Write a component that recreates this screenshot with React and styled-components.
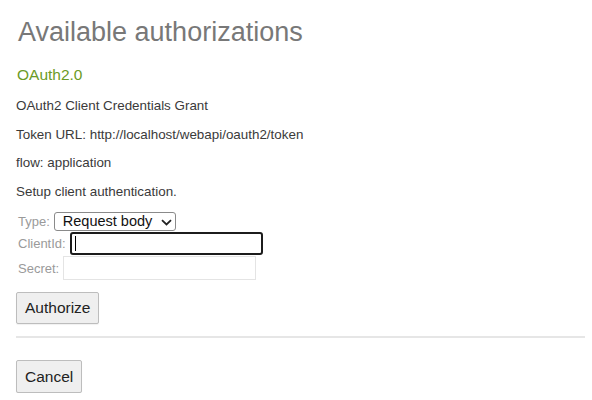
import styled, { createGlobalStyle } from 'styled-components'

const GlobalStyle = createGlobalStyle`
  body {
    margin: 0;
    background: #fff;
    font-family: "Liberation Sans", Arial, sans-serif;
  }
`;

const Modal = styled.div`
  padding: 17px 7px 0 16px;
  width: 569px;
`;

const Title = styled.h2`
  margin: 0 0 18px 2px;
  font-size: 27px;
  font-weight: normal;
  line-height: 31px;
  color: #787878;
`;

const SchemeName = styled.h4`
  margin: 0 0 14px 1px;
  font-size: 15.5px;
  font-weight: normal;
  line-height: 18px;
  color: #6b9b26;
`;

const Para = styled.p`
  margin: 0 0 13.5px 0;
  font-size: 13.4px;
  line-height: 15px;
  color: #3a3a3a;
`;

const Form = styled.div`
  display: flex;
  flex-direction: column;
  gap: 1px;
`;

const Row = styled.div`
  display: flex;
  align-items: center;
  gap: 4px;
`;

const Label = styled.label`
  font-size: 13px;
  color: #9a9a9a;
  margin-left: 2px;
`;

const SelectWrap = styled.div`
  position: relative;
  display: flex;
`;

const Select = styled.select`
  appearance: none;
  box-sizing: border-box;
  width: 122px;
  height: 19px;
  padding: 0 0 0 8px;
  font-family: "Liberation Sans", Arial, sans-serif;
  font-size: 14.5px;
  line-height: 17px;
  color: #111;
  background: #fff;
  border: 1px solid #8a8a8a;
  border-radius: 3px;
  outline: none;
`;

const Chevron = styled.svg`
  position: absolute;
  right: 4px;
  top: 7px;
  pointer-events: none;
`;

const Input = styled.input`
  box-sizing: border-box;
  width: 193px;
  height: ${p => p.focused ? '23px' : '24px'};
  border: ${p => p.focused ? '2px solid #1c1c1c' : '1px solid #e4e4e4'};
  border-radius: ${p => p.focused ? '3px' : '0'};
  outline: none;
  padding: 0 4px;
  font-size: 13px;
  background: #fff;
`;

const Caret = styled.span`
  position: absolute;
  left: 5px;
  top: 4px;
  width: 1px;
  height: 15px;
  background: #000;
`;

const InputWrap = styled.div`
  position: relative;
  display: flex;
`;

const Button = styled.button`
  box-sizing: border-box;
  height: ${p => p.tall ? '33px' : '32px'};
  padding: 0 8px;
  font-family: "Liberation Sans", Arial, sans-serif;
  font-size: 15.5px;
  color: #222;
  background: #efefef;
  border: 1px solid #bdbdbd;
  border-radius: 2px;
  box-shadow: 0 1px 1px rgba(0, 0, 0, 0.06);
`;

const Actions = styled.div`
  display: flex;
  margin-top: 12px;
`;

const Divider = styled.hr`
  border: none;
  border-top: 2px solid #e6e6e6;
  margin: 12px 0 22px 0;
  width: 569px;
`;

export default function App() {
  return (
    <>
      <GlobalStyle />
      <Modal>
        <Title>Available authorizations</Title>
        <SchemeName>OAuth2.0</SchemeName>
        <Para>OAuth2 Client Credentials Grant</Para>
        <Para>Token URL: http://localhost/webapi/oauth2/token</Para>
        <Para>flow: application</Para>
        <Para>Setup client authentication.</Para>
        <Form>
          <Row>
            <Label>Type:</Label>
            <SelectWrap>
              <Select defaultValue="body">
                <option value="body">Request body</option>
                <option value="header">Basic auth header</option>
              </Select>
              <Chevron width="11" height="7" viewBox="0 0 11 7">
                <path d="M1 1.2 L5.5 5.5 L10 1.2" fill="none" stroke="#222" strokeWidth="1.8" />
              </Chevron>
            </SelectWrap>
          </Row>
          <Row>
            <Label>ClientId:</Label>
            <InputWrap>
              <Input focused type="text" />
              <Caret />
            </InputWrap>
          </Row>
          <Row>
            <Label>Secret:</Label>
            <Input type="password" />
          </Row>
        </Form>
        <Actions>
          <Button>Authorize</Button>
        </Actions>
        <Divider />
        <Actions>
          <Button tall>Cancel</Button>
        </Actions>
      </Modal>
    </>
  )
}
